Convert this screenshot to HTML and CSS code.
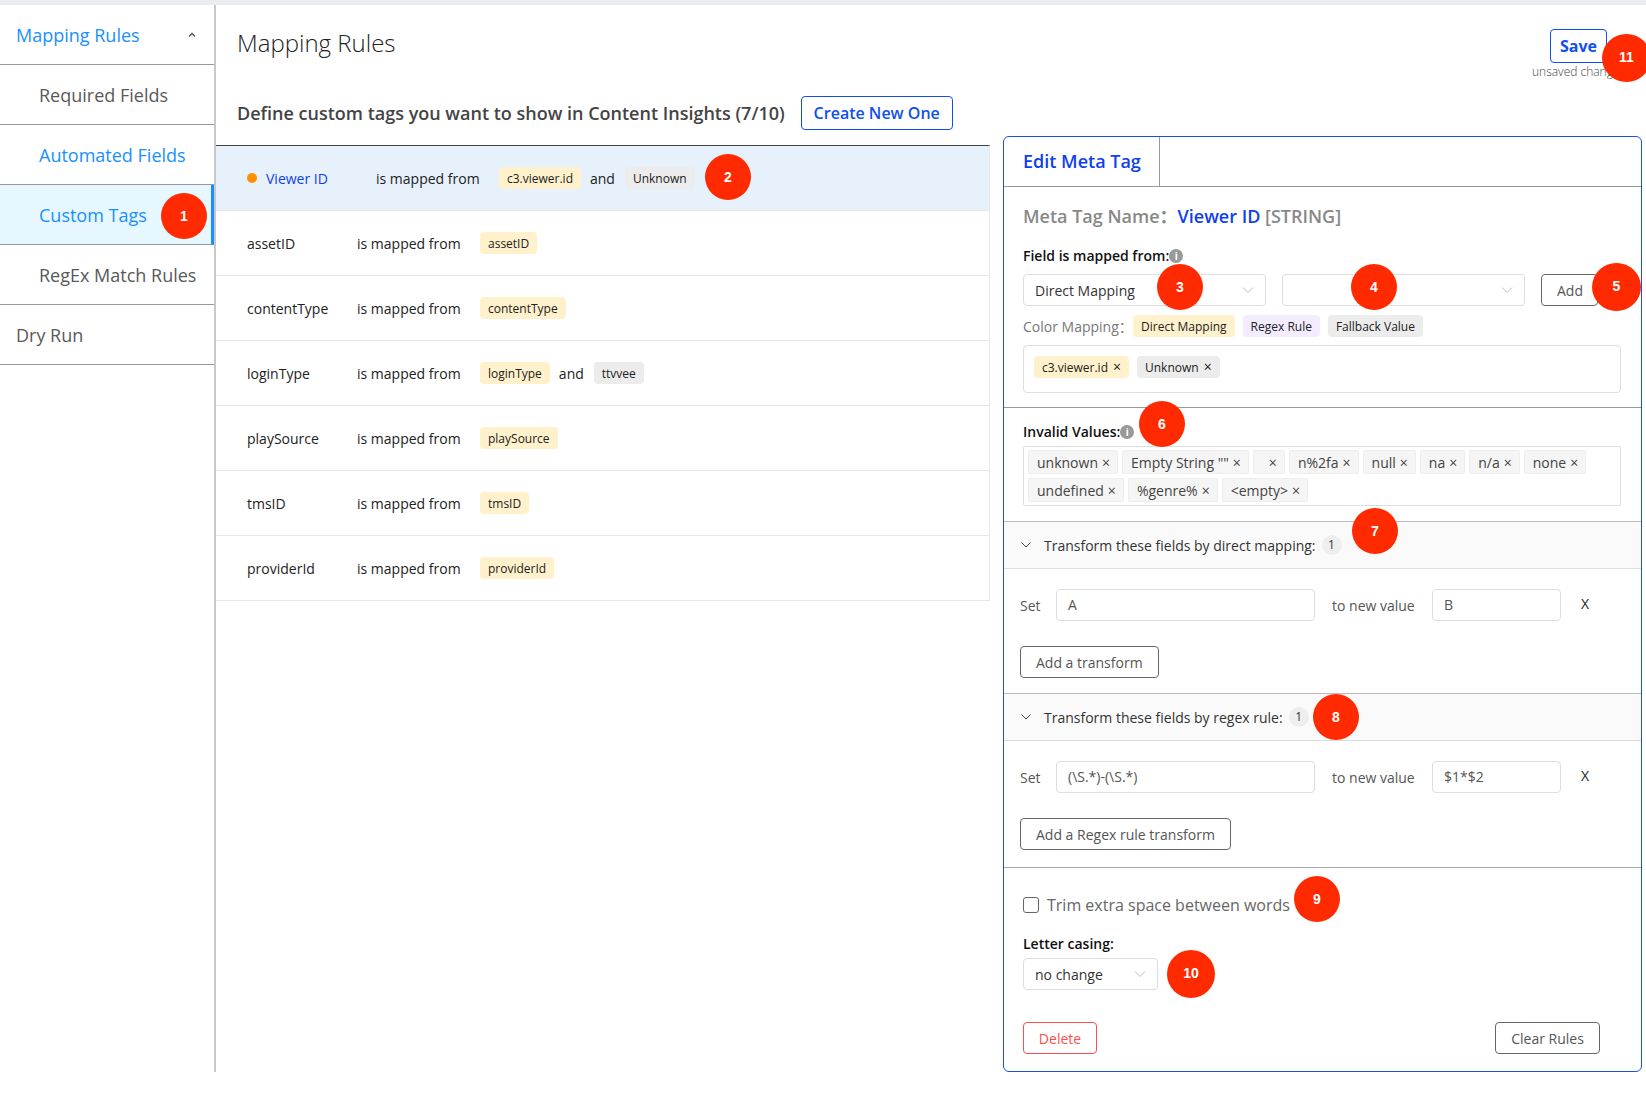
FILE: index.html
```html
<!DOCTYPE html>
<html>
<head>
  <title>Mapping Rules</title>
  <meta charset="UTF-8">
  <link rel="stylesheet" href="styles.css">
</head>
<body>
  <div class="topbar"></div>

  <div class="app">
    <!-- left menu -->
    <nav class="sidebar">
      <div class="menu-item menu-open">
        <span>Mapping Rules</span>
        <svg class="menu-caret" width="10" height="10" viewBox="0 0 10 10"><path d="M2 6.5 L5 3.5 L8 6.5" fill="none" stroke="#555" stroke-width="1.4"/></svg>
      </div>
      <div class="menu-item menu-sub">Required Fields</div>
      <div class="menu-item menu-sub menu-link">Automated Fields</div>
      <div class="menu-item menu-sub menu-link menu-active">Custom Tags</div>
      <div class="menu-item menu-sub">RegEx Match Rules</div>
      <div class="menu-item">Dry Run</div>
    </nav>

    <main class="main">
      <div class="page-head">
        <div class="head-left">
          <h1>Mapping Rules</h1>
          <div class="define-row">
            <h2>Define custom tags you want to show in Content Insights (7/10)</h2>
            <button class="btn-create">Create New One</button>
          </div>
        </div>
        <div class="save-box">
          <button class="btn-save">Save</button>
          <div class="unsaved">unsaved changes</div>
        </div>
      </div>

      <div class="content">
        <!-- tag list -->
        <div class="tag-list">
          <div class="tag-row tag-row-active">
            <span class="dot"></span>
            <span class="tag-name">Viewer ID</span>
            <span class="mapped">is mapped from</span>
            <span class="chip chip-yellow">c3.viewer.id</span>
            <span class="and">and</span>
            <span class="chip chip-grey">Unknown</span>
          </div>
          <div class="tag-row">
            <span class="tag-name">assetID</span>
            <span class="mapped">is mapped from</span>
            <span class="chip chip-yellow">assetID</span>
          </div>
          <div class="tag-row">
            <span class="tag-name">contentType</span>
            <span class="mapped">is mapped from</span>
            <span class="chip chip-yellow">contentType</span>
          </div>
          <div class="tag-row">
            <span class="tag-name">loginType</span>
            <span class="mapped">is mapped from</span>
            <span class="chip chip-yellow">loginType</span>
            <span class="and">and</span>
            <span class="chip chip-grey">ttvvee</span>
          </div>
          <div class="tag-row">
            <span class="tag-name">playSource</span>
            <span class="mapped">is mapped from</span>
            <span class="chip chip-yellow">playSource</span>
          </div>
          <div class="tag-row">
            <span class="tag-name">tmsID</span>
            <span class="mapped">is mapped from</span>
            <span class="chip chip-yellow">tmsID</span>
          </div>
          <div class="tag-row">
            <span class="tag-name">providerId</span>
            <span class="mapped">is mapped from</span>
            <span class="chip chip-yellow">providerId</span>
          </div>
        </div>

        <!-- edit panel -->
        <section class="panel">
          <div class="panel-tabs">
            <div class="panel-tab">Edit Meta Tag</div>
          </div>

          <div class="panel-mapping">
            <div class="meta-name">Meta Tag Name：<span class="meta-value">Viewer ID</span> [STRING]</div>
            <div class="field-label">Field is mapped from:<span class="info">i</span></div>
            <div class="mapping-row">
              <div class="select select-wide">
                <span>Direct Mapping</span>
                <svg width="12" height="8" viewBox="0 0 12 8"><path d="M1 1.5 L6 6.5 L11 1.5" fill="none" stroke="#bbb" stroke-width="1"/></svg>
              </div>
              <div class="select select-wide">
                <span></span>
                <svg width="12" height="8" viewBox="0 0 12 8"><path d="M1 1.5 L6 6.5 L11 1.5" fill="none" stroke="#bbb" stroke-width="1"/></svg>
              </div>
              <button class="btn btn-add">Add</button>
            </div>
            <div class="color-row">
              <span class="color-label">Color Mapping：</span>
              <span class="chip chip-yellow">Direct Mapping</span>
              <span class="chip chip-purple">Regex Rule</span>
              <span class="chip chip-grey">Fallback Value</span>
            </div>
            <div class="mapped-box">
              <span class="chip chip-yellow">c3.viewer.id<i class="chip-x">×</i></span>
              <span class="chip chip-grey">Unknown<i class="chip-x">×</i></span>
            </div>
          </div>

          <div class="panel-invalid">
            <div class="field-label">Invalid Values:<span class="info">i</span></div>
            <div class="invalid-box">
              <span class="val">unknown<i class="val-x">×</i></span>
              <span class="val">Empty String ""<i class="val-x">×</i></span>
              <span class="val val-blank"><i class="val-x">×</i></span>
              <span class="val">n%2fa<i class="val-x">×</i></span>
              <span class="val">null<i class="val-x">×</i></span>
              <span class="val">na<i class="val-x">×</i></span>
              <span class="val">n/a<i class="val-x">×</i></span>
              <span class="val">none<i class="val-x">×</i></span>
              <span class="val">undefined<i class="val-x">×</i></span>
              <span class="val">%genre%<i class="val-x">×</i></span>
              <span class="val">&lt;empty&gt;<i class="val-x">×</i></span>
            </div>
          </div>

          <div class="section-head">
            <svg width="12" height="8" viewBox="0 0 12 8"><path d="M1.5 1.5 L6 6 L10.5 1.5" fill="none" stroke="#444" stroke-width="1"/></svg>
            <span>Transform these fields by direct mapping:</span>
            <span class="count">1</span>
          </div>
          <div class="section-body">
            <div class="set-row">
              <span class="set-label">Set</span>
              <div class="input input-from">A</div>
              <span class="to-label">to new value</span>
              <div class="input input-to">B</div>
              <span class="remove">X</span>
            </div>
            <button class="btn btn-transform">Add a transform</button>
          </div>

          <div class="section-head">
            <svg width="12" height="8" viewBox="0 0 12 8"><path d="M1.5 1.5 L6 6 L10.5 1.5" fill="none" stroke="#444" stroke-width="1"/></svg>
            <span>Transform these fields by regex rule:</span>
            <span class="count">1</span>
          </div>
          <div class="section-body section-body-last">
            <div class="set-row">
              <span class="set-label">Set</span>
              <div class="input input-from">(\S.*)-(\S.*)</div>
              <span class="to-label">to new value</span>
              <div class="input input-to">$1*$2</div>
              <span class="remove">X</span>
            </div>
            <button class="btn btn-transform">Add a Regex rule transform</button>
          </div>

          <div class="panel-bottom">
            <label class="trim-row"><span class="checkbox"></span>Trim extra space between words</label>
            <div class="field-label casing-label">Letter casing:</div>
            <div class="select select-small">
              <span>no change</span>
              <svg width="12" height="8" viewBox="0 0 12 8"><path d="M1 1.5 L6 6.5 L11 1.5" fill="none" stroke="#bbb" stroke-width="1"/></svg>
            </div>
            <div class="panel-actions">
              <button class="btn btn-delete">Delete</button>
              <button class="btn btn-clear">Clear Rules</button>
            </div>
          </div>
        </section>
      </div>
    </main>
  </div>

  <!-- numbered callouts on top of the screenshot -->
  <span class="callout callout-1">1</span>
  <span class="callout callout-2">2</span>
  <span class="callout callout-3">3</span>
  <span class="callout callout-4">4</span>
  <span class="callout callout-5">5</span>
  <span class="callout callout-6">6</span>
  <span class="callout callout-7">7</span>
  <span class="callout callout-8">8</span>
  <span class="callout callout-9">9</span>
  <span class="callout callout-10">10</span>
  <span class="callout callout-11">11</span>
</body>
</html>
```

FILE: styles.css
```css
* {
  box-sizing: border-box;
}
html, body {
  height: 1104px;
  overflow: hidden;
}
body {
  position: relative;
  margin: 0;
  font-family: "Open Sans", "Noto Sans CJK SC", sans-serif;
  font-size: 14px;
  color: #333;
  background: #fff;
}
button {
  font-family: inherit;
  background: #fff;
  cursor: pointer;
}
.topbar {
  height: 5px;
  background: #e8edf0;
}
.app {
  display: flex;
  height: 1067px;
}

/* sidebar */
.sidebar {
  width: 216px;
  flex-shrink: 0;
  border-right: 2px solid #c8c8c8;
}
.menu-item {
  display: flex;
  align-items: center;
  justify-content: space-between;
  height: 60px;
  padding: 0 16px;
  font-size: 18px;
  color: #595959;
  border-bottom: 1px solid #999;
}
.menu-open {
  height: 60px;
  color: #1890ff;
  padding-right: 17px;
}
.menu-sub {
  padding-left: 39px;
}
.menu-link {
  color: #1890ff;
}
.menu-active {
  background: #e6f7ff;
  border-right: 3px solid #1890ff;
}

/* page head */
.main {
  flex: 1;
  min-width: 0;
}
.page-head {
  display: flex;
  justify-content: space-between;
  height: 131px;
}
.head-left {
  padding-left: 21px;
}
h1 {
  margin: 21px 0 0;
  font-size: 24px;
  font-weight: 300;
  line-height: 34px;
  color: #222;
}
.define-row {
  display: flex;
  align-items: center;
  margin-top: 36px;
}
h2 {
  margin: 0;
  font-size: 18px;
  font-weight: 600;
  line-height: 34px;
  color: #444;
}
.btn-create {
  width: 152px;
  height: 34px;
  margin-left: 16px;
  padding: 0;
  font-size: 16px;
  font-weight: 600;
  color: #0f4fef;
  border: 1px solid #0f4fef;
  border-radius: 4px;
}
.save-box {
  width: 114px;
  flex-shrink: 0;
  padding-top: 24px;
  white-space: nowrap;
}
.btn-save {
  display: block;
  width: 57px;
  height: 34px;
  margin-left: 18px;
  padding: 0;
  font-size: 16px;
  font-weight: 700;
  color: #0f4fef;
  border: 1px solid #0f4fef;
  border-radius: 4px;
}
.unsaved {
  font-size: 12px;
  font-weight: 300;
  line-height: 18px;
  color: #444;
}

/* tag list */
.content {
  display: flex;
  align-items: flex-start;
}
.tag-list {
  width: 774px;
  margin-top: 9px;
  border-top: 1px solid #444;
  border-right: 1px solid #e8e8e8;
  flex-shrink: 0;
}
.tag-row {
  display: flex;
  align-items: center;
  height: 65px;
  padding-left: 31px;
  border-bottom: 1px solid #e6e6e6;
  color: #222;
}
.tag-row-active {
  height: 65px;
  background: #e6f1fb;
  padding-left: 31px;
}
.dot {
  width: 10px;
  height: 10px;
  margin-right: 9px;
  border-radius: 50%;
  background: #ff9100;
}
.tag-name {
  width: 110px;
  flex-shrink: 0;
}
.tag-row-active .tag-name {
  color: #0f3fef;
}
.mapped {
  width: 123px;
  flex-shrink: 0;
}
.and {
  margin: 0 10px 0 9px;
}
.chip {
  display: inline-flex;
  align-items: center;
  height: 22px;
  padding: 0 8px;
  font-size: 12px;
  color: #222;
  border-radius: 4px;
}
.chip-yellow {
  background: #fff1cc;
}
.chip-grey {
  background: #ececec;
}
.chip-purple {
  background: #f3ecff;
}
.chip-x {
  margin-left: 5px;
  font-style: normal;
  font-size: 14px;
  line-height: 1;
}

/* edit panel */
.panel {
  width: 639px;
  height: 936px;
  margin-left: 13px;
  border: 1px solid #1a4fe8;
  border-radius: 6px;
  overflow: hidden;
}
.panel-tabs {
  height: 50px;
  border-bottom: 1px solid #999;
}
.panel-tab {
  width: 156px;
  height: 49px;
  padding-left: 19px;
  font-size: 18px;
  font-weight: 600;
  line-height: 48px;
  color: #0f3fef;
  border-right: 1px solid #999;
}
.panel-mapping {
  height: 221px;
  padding: 16px 19px 0 19px;
  border-bottom: 1px solid #999;
}
.meta-name {
  font-size: 18px;
  font-weight: 600;
  line-height: 26px;
  color: #888;
  white-space: nowrap;
}
.meta-value {
  color: #0f3fef;
}
.field-label {
  display: flex;
  align-items: center;
  font-size: 14px;
  font-weight: 600;
  line-height: 20px;
  color: #111;
}
.panel-mapping .field-label {
  margin-top: 17px;
}
.info {
  display: inline-block;
  width: 14px;
  height: 14px;
  border-radius: 50%;
  background: #999;
  color: #fff;
  font-size: 10px;
  font-weight: 700;
  line-height: 14px;
  text-align: center;
}
.mapping-row {
  display: flex;
  margin-top: 8px;
}
.select {
  display: flex;
  align-items: center;
  justify-content: space-between;
  height: 32px;
  padding: 0 11px;
  color: #333;
  border: 1px solid #ddd;
  border-radius: 4px;
}
.select-wide {
  width: 243px;
  margin-right: 16px;
}
.btn {
  height: 32px;
  padding: 0 15px;
  font-size: 14px;
  color: #555;
  border: 1px solid #666;
  border-radius: 4px;
}
.btn-add {
  width: 57px;
}
.color-row {
  display: flex;
  align-items: center;
  margin-top: 9px;
}
.color-label {
  width: 110px;
  color: #777;
}
.color-row .chip {
  margin-right: 8px;
}
.mapped-box {
  display: flex;
  gap: 8px;
  align-items: flex-start;
  width: 598px;
  height: 48px;
  margin-top: 8px;
  padding: 10px;
  border: 1px solid #ddd;
  border-radius: 4px;
}

/* invalid values */
.panel-invalid {
  height: 113px;
  padding: 14px 19px 0;
}
.invalid-box {
  display: flex;
  flex-wrap: wrap;
  gap: 4px;
  width: 598px;
  height: 60px;
  margin-top: 4px;
  padding: 3px 4px;
  border: 1px solid #ddd;
  border-radius: 2px;
}
.val {
  display: inline-flex;
  align-items: center;
  height: 24px;
  padding: 0 7px 0 8px;
  color: #444;
  background: #f5f5f5;
  border: 1px solid #eee;
  border-radius: 2px;
}
.val-blank {
  width: 32px;
  justify-content: flex-end;
}
.val-x {
  margin-left: 4px;
  font-style: normal;
}

/* transform sections */
.section-head {
  display: flex;
  align-items: center;
  height: 48px;
  padding-left: 16px;
  color: #333;
  background: #fafafa;
  border-top: 1px solid #bbb;
  border-bottom: 1px solid #ddd;
}
.section-head svg {
  margin-right: 12px;
}
.count {
  width: 20px;
  height: 20px;
  margin-left: 6px;
  font-size: 12px;
  line-height: 20px;
  text-align: center;
  border-radius: 50%;
  background: #eee;
}
.section-body {
  height: 124px;
  padding: 20px 16px 0;
}
.section-body-last {
  height: 126px;
}
.set-row {
  display: flex;
  align-items: center;
}
.set-label {
  width: 36px;
  color: #555;
}
.to-label {
  width: 117px;
  padding-left: 17px;
  color: #555;
}
.input {
  height: 32px;
  padding: 0 11px;
  line-height: 30px;
  color: #555;
  border: 1px solid #ddd;
  border-radius: 4px;
}
.input-from {
  width: 259px;
}
.input-to {
  width: 129px;
}
.remove {
  margin-left: 20px;
  margin-top: -4px;
  font-size: 14px;
  color: #222;
}
.btn-transform {
  display: block;
  margin-top: 25px;
}

/* bottom of panel */
.panel-bottom {
  padding: 25px 19px 0;
  border-top: 1px solid #aaa;
}
.trim-row {
  display: flex;
  align-items: center;
  font-size: 16px;
  line-height: 24px;
  color: #666;
}
.checkbox {
  width: 16px;
  height: 16px;
  margin-right: 8px;
  border: 1px solid #666;
  border-radius: 3px;
}
.casing-label {
  margin-top: 17px;
  line-height: 20px;
}
.select-small {
  width: 135px;
  margin-top: 4px;
}
.panel-actions {
  display: flex;
  justify-content: space-between;
  width: 577px;
  margin-top: 32px;
}
.btn-delete {
  width: 74px;
  padding: 0;
  color: #ff4d4f;
  border-color: #ff4d4f;
}
.btn-clear {
  width: 105px;
  padding: 0;
}

/* callouts */
.callout {
  position: absolute;
  width: 46px;
  height: 46px;
  margin: -23px 0 0 -23px;
  font-family: "Liberation Sans", sans-serif;
  font-size: 14px;
  font-weight: 700;
  line-height: 46px;
  text-align: center;
  color: #fff;
  background: #ff2a00;
  border-radius: 50%;
}
.callout-1 { left: 184px; top: 216px; }
.callout-2 { left: 728px; top: 177px; }
.callout-3 { left: 1180px; top: 287px; }
.callout-4 { left: 1374px; top: 287px; }
.callout-5 { left: 1616px; top: 287px; width: 49px; height: 48px; margin-top: -24px; margin-left: -24px; line-height: 46px; }
.callout-6 { left: 1162px; top: 424px; }
.callout-7 { left: 1375px; top: 531px; }
.callout-8 { left: 1336px; top: 717px; }
.callout-9 { left: 1317px; top: 899px; }
.callout-10 { left: 1191px; top: 974px; width: 48px; height: 48px; margin-top: -24px; margin-left: -24px; line-height: 46px; }
.callout-11 { left: 1626px; top: 58px; width: 49px; height: 48px; margin-top: -24px; margin-left: -24px; }
```
